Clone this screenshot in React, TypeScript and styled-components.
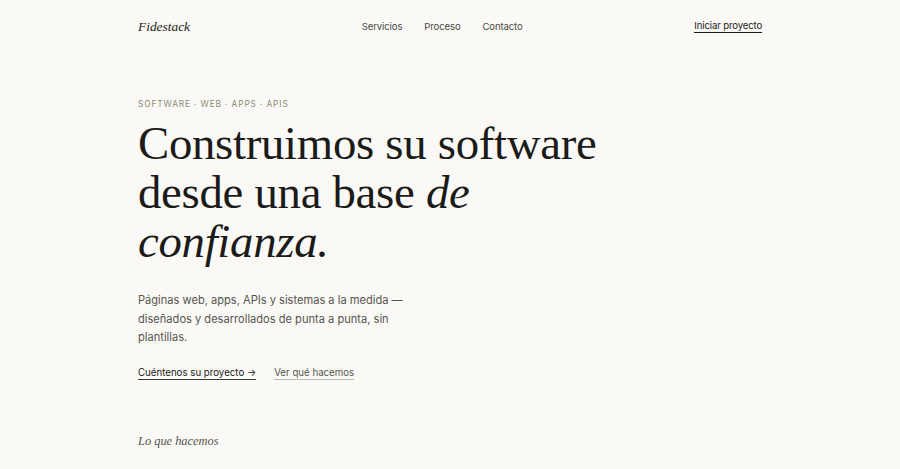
import React from "react";
import styled, { createGlobalStyle } from "styled-components";

const GlobalStyle = createGlobalStyle`
  html, body {
    margin: 0;
    padding: 0;
    background: #faf9f6;
  }
  body {
    font-family: Inter, "Noto Sans", sans-serif;
    color: #1b1b19;
  }
  * { box-sizing: border-box; }
`;

const Page = styled.div`
  width: 624px;
  margin: 0 auto;
  min-height: 469px;
`;

const Header = styled.header`
  display: flex;
  align-items: center;
  justify-content: space-between;
  height: 51px;
  padding-top: 2px;
`;

const Logo = styled.a`
  font-family: "Liberation Serif", serif;
  font-style: italic;
  font-size: 13.4px;
  color: #1b1b19;
  text-decoration: none;
`;

const Nav = styled.nav`
  display: flex;
  gap: 22px;
`;

const NavLink = styled.a`
  font-size: 9.6px;
  letter-spacing: -0.15px;
  color: #4a4a46;
  text-decoration: none;
`;

const Cta = styled.a`
  font-size: 9.6px;
  letter-spacing: -0.15px;
  color: #1b1b19;
  text-decoration: none;
  border-bottom: 1px solid #1b1b19;
  padding-bottom: 1px;
`;

const Hero = styled.section`
  padding-top: 48px;
`;

const Eyebrow = styled.div`
  font-size: 8.4px;
  letter-spacing: 0.85px;
  color: #8a8a72;
  text-transform: uppercase;
`;

const Title = styled.h1`
  font-family: "Liberation Serif", serif;
  font-weight: 400;
  font-size: 46.8px;
  line-height: 49px;
  letter-spacing: -0.3px;
  margin: 10px 0 0;
  max-width: 480px;
  color: #1b1b19;

  em { font-style: italic; }
`;

const Lead = styled.p`
  font-size: 11.1px;
  line-height: 18.5px;
  color: #55554f;
  margin: 25px 0 0;
  max-width: 280px;
`;

const Actions = styled.div`
  display: flex;
  gap: 18px;
  margin-top: 20px;
`;

const ActionLink = styled.a<{ $primary?: boolean }>`
  font-size: 9.7px;
  color: ${(p) => (p.$primary ? "#1b1b19" : "#55554f")};
  text-decoration: none;
  border-bottom: 1px solid ${(p) => (p.$primary ? "#3a3a36" : "#b8b8b0")};
  padding-bottom: 1px;
`;

const SectionLabel = styled.h2`
  font-family: "Liberation Serif", serif;
  font-style: italic;
  font-weight: 400;
  font-size: 12.4px;
  color: #55554f;
  margin: 54px 0 0;
`;

export default function App() {
  return (
    <>
      <GlobalStyle />
      <Page>
        <Header>
          <Logo href="#">Fidestack</Logo>
          <Nav>
            <NavLink href="#">Servicios</NavLink>
            <NavLink href="#">Proceso</NavLink>
            <NavLink href="#">Contacto</NavLink>
          </Nav>
          <Cta href="#">Iniciar proyecto</Cta>
        </Header>
        <Hero>
          <Eyebrow>Software · Web · Apps · APIs</Eyebrow>
          <Title>
            Construimos su software desde una base <em>de confianza.</em>
          </Title>
          <Lead>
            Páginas web, apps, APIs y sistemas a la medida — diseñados y
            desarrollados de punta a punta, sin plantillas.
          </Lead>
          <Actions>
            <ActionLink href="#" $primary>Cuéntenos su proyecto →</ActionLink>
            <ActionLink href="#">Ver qué hacemos</ActionLink>
          </Actions>
        </Hero>
        <SectionLabel>Lo que hacemos</SectionLabel>
      </Page>
    </>
  );
}
